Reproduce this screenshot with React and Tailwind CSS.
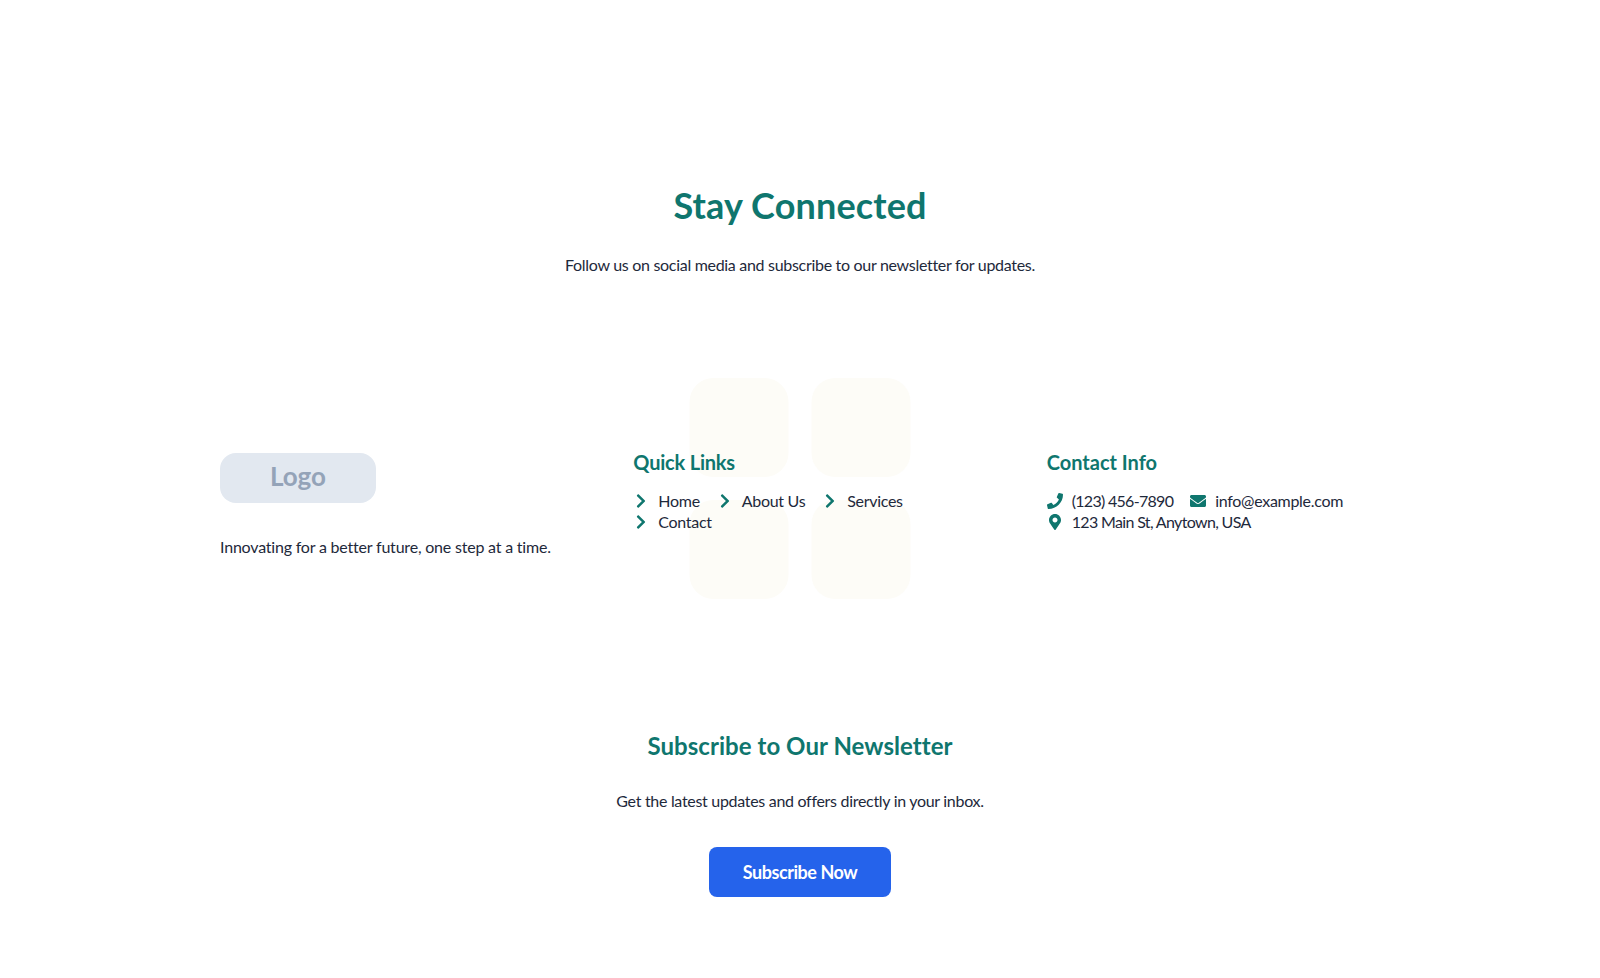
import { FaChevronRight, FaPhone, FaEnvelope, FaMapMarkerAlt } from "react-icons/fa";

const links = ["Home", "About Us", "Services", "Contact"];

const contacts = [
  { icon: FaPhone, text: "(123) 456-7890", textClass: "tracking-[-0.7px]" },
  { icon: FaEnvelope, text: "info@example.com" },
  { icon: FaMapMarkerAlt, text: "123 Main St, Anytown, USA", textClass: "tracking-[-0.65px]" },
];

function Row({ icon: Icon, text, textClass }) {
  return (
    <li className="flex items-center">
      <Icon className="w-4 h-4 mr-[9px] text-[#0f766e] shrink-0" />
      <span className={textClass}>{text}</span>
    </li>
  );
}

export default function App() {
  return (
    <div className="min-h-[978px] bg-white text-[#1e293b] text-base tracking-[-0.3px] font-['Lato',sans-serif] overflow-hidden">
      <section className="pt-[185px] text-center">
        <h1 className="text-4xl font-bold tracking-[0.15px] text-[#0f766e]">Stay Connected</h1>
        <p className="mt-7">Follow us on social media and subscribe to our newsletter for updates.</p>
      </section>

      <section className="relative mt-[176px] px-[220px]">
        {/* tiles sit behind the footer columns */}
        <div className="absolute left-1/2 top-[-75px] -translate-x-1/2 grid grid-cols-2 gap-[23px]">
          <div className="w-[99px] h-[99px] rounded-3xl bg-[#fdfcf7]" />
          <div className="w-[99px] h-[99px] rounded-3xl bg-[#fdfcf7]" />
          <div className="w-[99px] h-[99px] rounded-3xl bg-[#fdfcf7]" />
          <div className="w-[99px] h-[99px] rounded-3xl bg-[#fdfcf7]" />
        </div>

        <div className="relative grid grid-cols-3 gap-20">
          <div>
            <div className="w-[156px] h-[50px] pb-1 rounded-2xl bg-[#e2e8f0] flex items-center justify-center text-[26px] font-bold tracking-normal text-[#94a3b8]">
              Logo
            </div>
            <p className="mt-[32px] tracking-[-0.2px]">Innovating for a better future, one step at a time.</p>
          </div>

          <div>
            <h2 className="text-xl leading-[18px] font-bold tracking-[-0.2px] text-[#0f766e]">Quick Links</h2>
            <ul className="mt-[19px] flex flex-wrap gap-x-[17px] leading-[21px]">
              {links.map((l) => (
                <Row key={l} icon={FaChevronRight} text={l} />
              ))}
            </ul>
          </div>

          <div>
            <h2 className="text-xl leading-[18px] font-bold tracking-normal text-[#0f766e]">Contact Info</h2>
            <ul className="mt-[19px] flex flex-wrap gap-x-[17px] leading-[21px]">
              {contacts.map((c) => (
                <Row key={c.text} icon={c.icon} text={c.text} textClass={c.textClass} />
              ))}
            </ul>
          </div>
        </div>
      </section>

      <section className="mt-[171px] flex flex-col items-center">
        <h2 className="text-2xl font-bold leading-8 tracking-[0.05px] text-[#0f766e]">Subscribe to Our Newsletter</h2>
        <p className="mt-[27px]">Get the latest updates and offers directly in your inbox.</p>
        <button className="mt-[34px] w-[182px] h-[50px] rounded-lg bg-[#2563eb] text-white font-bold text-lg tracking-[-0.45px]">
          Subscribe Now
        </button>
      </section>
    </div>
  );
}
